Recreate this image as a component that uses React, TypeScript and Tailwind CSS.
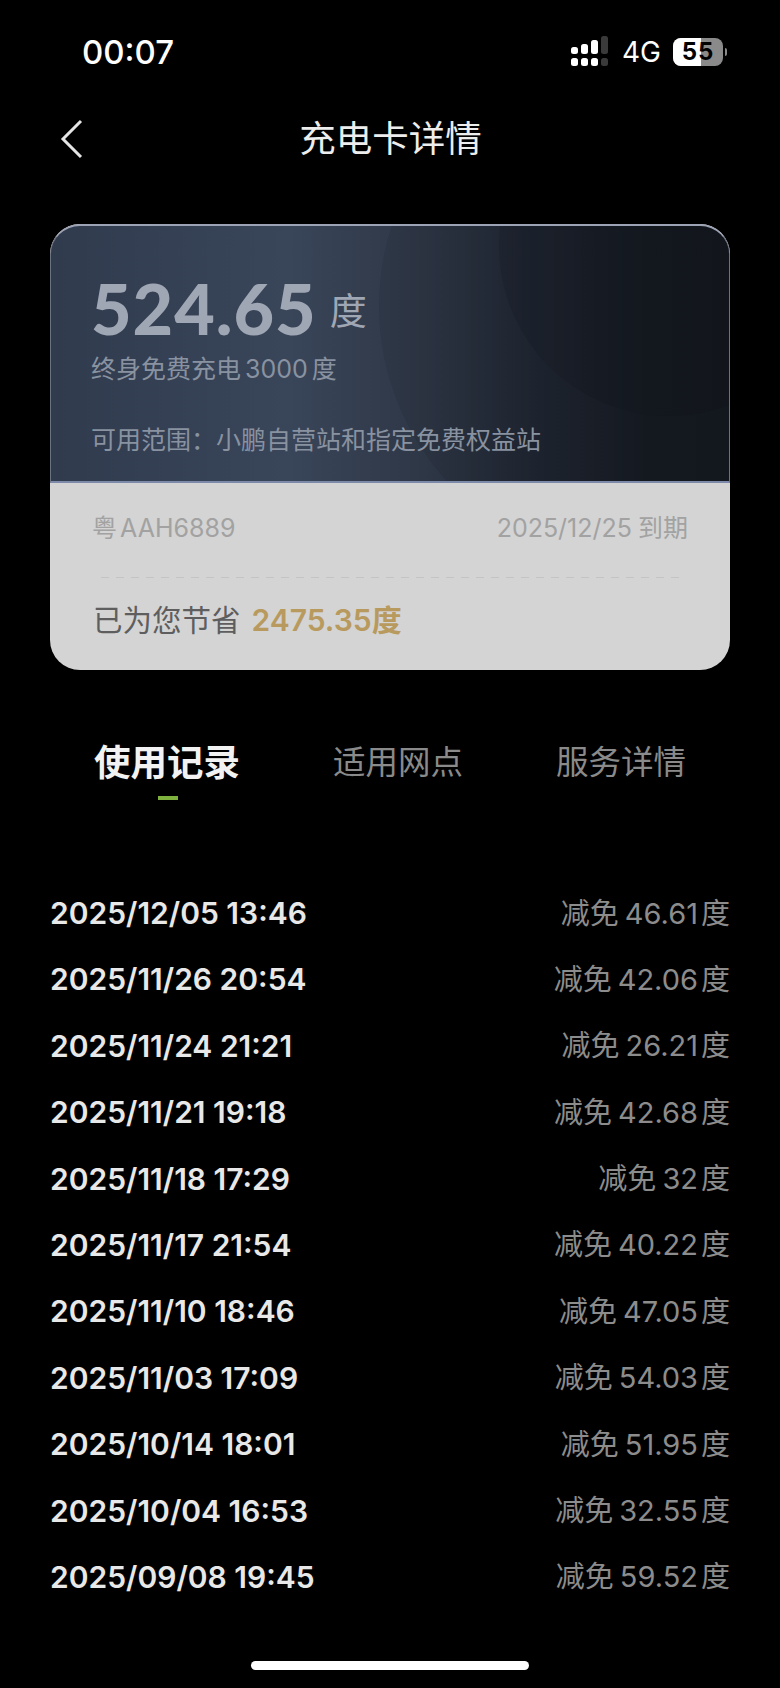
const rows: [string, string][] = [
  ["2025/12/05 13:46", "46.61"],
  ["2025/11/26 20:54", "42.06"],
  ["2025/11/24 21:21", "26.21"],
  ["2025/11/21 19:18", "42.68"],
  ["2025/11/18 17:29", "32"],
  ["2025/11/17 21:54", "40.22"],
  ["2025/11/10 18:46", "47.05"],
  ["2025/11/03 17:09", "54.03"],
  ["2025/10/14 18:01", "51.95"],
  ["2025/10/04 16:53", "32.55"],
  ["2025/09/08 19:45", "59.52"],
];

function Signal() {
  return (
    <svg width="38" height="32" viewBox="0 0 38 32">
      <rect x="0" y="11" width="7" height="7" rx="2.5" fill="#fff" />
      <rect x="10" y="8" width="7" height="10" rx="2.5" fill="#fff" />
      <rect x="20" y="4" width="7" height="14" rx="2.5" fill="#fff" />
      <rect x="30" y="0" width="7" height="18" rx="2.5" fill="#3a3a3a" />
      <rect x="0" y="22" width="7" height="8" rx="2.5" fill="#fff" />
      <rect x="10" y="22" width="7" height="8" rx="2.5" fill="#fff" />
      <rect x="20" y="22" width="7" height="8" rx="2.5" fill="#fff" />
      <rect x="30" y="22" width="7" height="8" rx="2.5" fill="#3a3a3a" />
    </svg>
  );
}

export default function App() {
  return (
    <div className="flex h-[1688px] w-[780px] flex-col overflow-hidden bg-black font-['Inter','Noto_Sans_CJK_SC',sans-serif]">
      <div className="flex h-[104px] items-center justify-between pl-[82px] pr-[53px]">
        <span className="text-[33px] font-medium leading-none text-white">00:07</span>
        <div className="flex items-center">
          <Signal />
          <span className="ml-[13px] text-[28px] leading-none text-white">4G</span>
          <div className="relative ml-[12px] flex h-[28px] w-[50px] items-center justify-center overflow-hidden rounded-[8px] bg-[#8a8a8a]">
            <div className="absolute inset-y-0 left-0 w-[28px] bg-white" />
            <span className="relative text-[24px] font-bold leading-none tracking-[1px] text-black">55</span>
          </div>
          <div className="ml-[2px] h-[8px] w-[2px] rounded-r bg-[#8a8a8a]" />
        </div>
      </div>

      <div className="relative flex h-[68px] items-center justify-center">
        <svg className="absolute left-[60px] top-[15px]" width="24" height="40" viewBox="0 0 24 40" fill="none">
          <path d="M21 2 L3 20 L21 38" stroke="#e5e5e5" strokeWidth="3" />
        </svg>
        <span className="pl-[1px] pt-[2px] text-[36.5px] leading-none text-[#ededed]">充电卡详情</span>
      </div>

      <div className="mx-[50px] mt-[52px] h-[446px] overflow-hidden rounded-[30px] bg-[#d4d4d4]">
        <div className="relative h-[259px] overflow-hidden rounded-t-[30px] border-x border-t-2 border-b-2 border-x-[#6b7280] border-t-[#9ca3b5] border-b-[#7d89a8] bg-[linear-gradient(90deg,#303b4e_0%,#394559_35%,#2e3746_55%,#1e2530_72%,#151a21_88%,#14181f_100%)] pl-[40px]">
          <div className="absolute right-[-170px] top-[-180px] h-[520px] w-[520px] rounded-full bg-[#0f1319] opacity-[0.1]" />
          <div className="absolute right-[-110px] top-[-150px] h-[340px] w-[340px] rounded-full bg-[#0c0f14] opacity-[0.14]" />
          <div className="relative flex items-baseline pt-[52px]">
            <span className="font-['Lato'] text-[70px] font-black leading-[60px] tracking-[1px] text-[#a0a7b4]">524.65</span>
            <span className="relative top-[-10px] ml-[13px] text-[37px] leading-[60px] text-[#a0a7b4]">度</span>
          </div>
          <div className="relative mt-[-1px] flex text-[25px] leading-[36px] text-[#8992a0]">
            <span>终身免费充电</span>
            <span className="ml-[4px]">3000</span>
            <span className="ml-[4px]">度</span>
          </div>
          <div className="relative mt-[35px] text-[25px] leading-[36px] text-[#8992a0]">可用范围：小鹏自营站和指定免费权益站</div>
        </div>
        <div className="flex items-center justify-between px-[42px] pt-[25px] text-[25px] leading-[40px] text-[#a2a2a2]">
          <span className="flex">
            <span>粤</span>
            <span className="ml-[3px]">AAH6889</span>
          </span>
          <span className="flex">
            <span>2025/12/25</span>
            <span className="ml-[6px]">到期</span>
          </span>
        </div>
        <div className="mx-[51px] mt-[29px] h-px bg-[repeating-linear-gradient(90deg,#c4c4c4_0px,#c4c4c4_8px,transparent_8px,transparent_15px)]" />
        <div className="flex items-center px-[43px] pt-[20px] text-[29.5px] leading-[44px] text-[#5e5e5e]">
          <span>已为您节省</span>
          <span className="ml-[11px] text-[30px] font-semibold text-[#b89a5e]">2475.35度</span>
        </div>
      </div>

      <div className="mt-[67px] flex items-center justify-between pl-[94px] pr-[94px]">
        <div className="relative">
          <span className="text-[36.5px] font-semibold leading-[52px] text-[#f2f2f2]">使用记录</span>
          <div className="absolute left-[64px] top-[59px] h-[4px] w-[20px] bg-[#7fb13f]" />
        </div>
        <span className="text-[32.5px] leading-[52px] text-[#8a8a8a]">适用网点</span>
        <span className="text-[32.5px] leading-[52px] text-[#8a8a8a]">服务详情</span>
      </div>

      <div className="mt-[104px] flex flex-col gap-[26.4px] px-[50px]">
        {rows.map(([d, v]) => (
          <div key={d} className="flex h-[40px] items-center justify-between">
            <span className="text-[30px] font-semibold leading-none text-[#e8e8e8]">{d}</span>
            <span className="flex text-[29px] leading-none text-[#8c8c8c]">
              <span>减免</span>
              <span className="ml-[6px]">{v}</span>
              <span className="ml-[3px]">度</span>
            </span>
          </div>
        ))}
      </div>

      <div className="mx-auto mb-[18px] mt-auto h-[9px] w-[278px] rounded-full bg-white" />
    </div>
  );
}
